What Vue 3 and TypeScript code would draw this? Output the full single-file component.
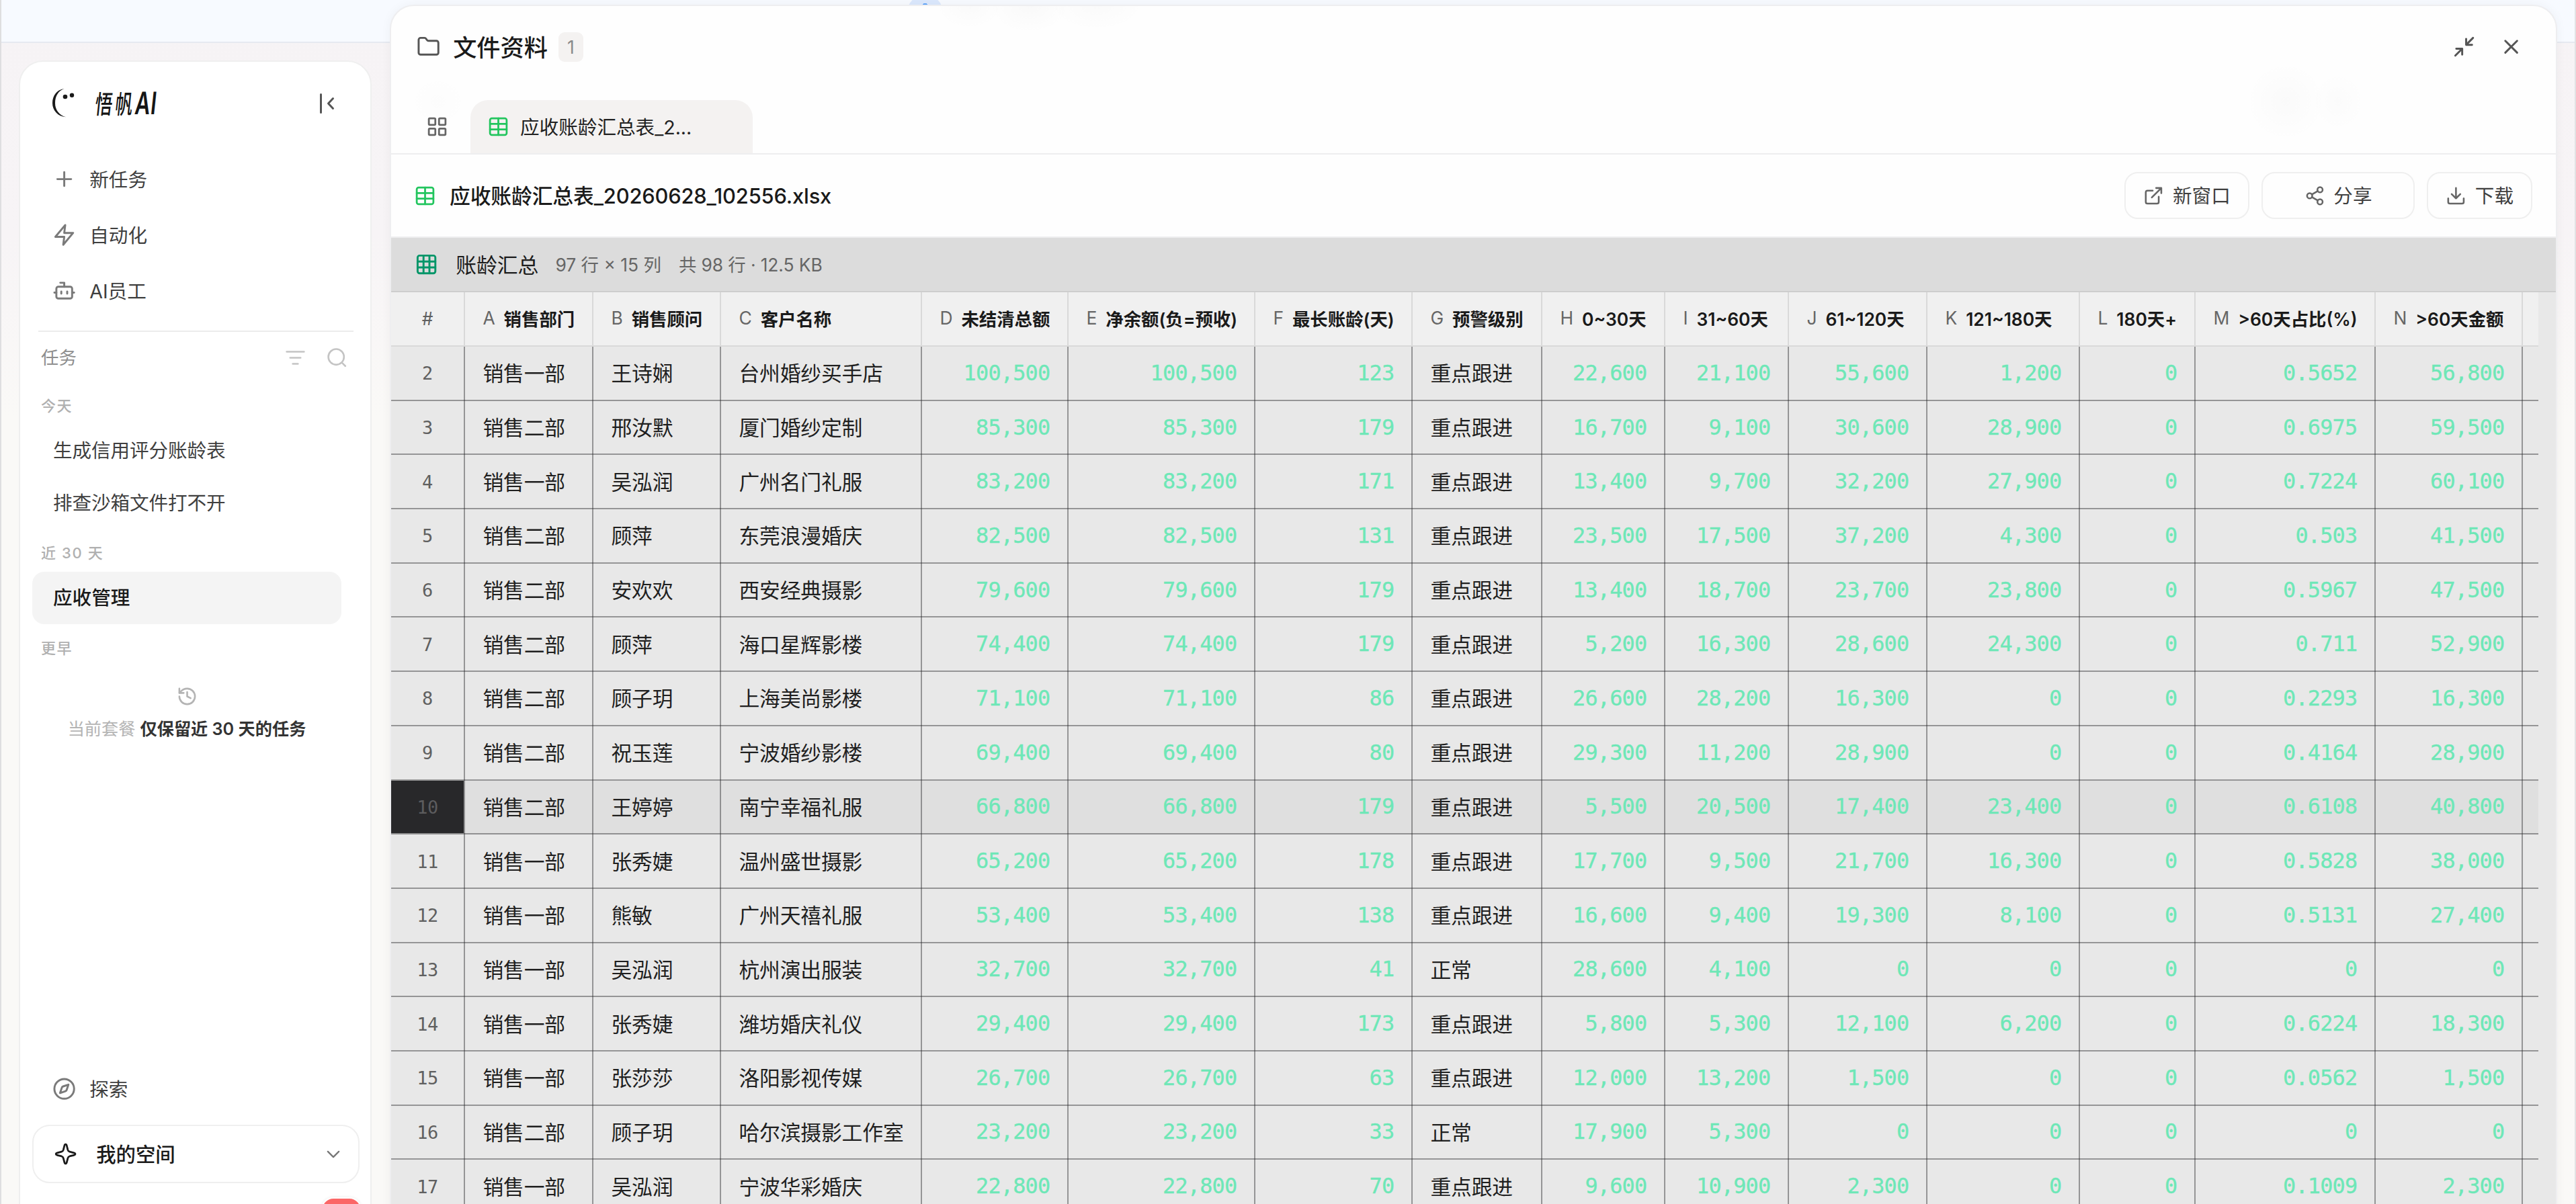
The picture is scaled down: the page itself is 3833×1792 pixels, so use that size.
<script setup lang="ts">
interface Column { letter: string; name: string; width: number; numeric: boolean }

const columns: Column[] = [
  { letter: 'A', name: '销售部门', width: 191, numeric: false },
  { letter: 'B', name: '销售顾问', width: 190, numeric: false },
  { letter: 'C', name: '客户名称', width: 299, numeric: false },
  { letter: 'D', name: '未结清总额', width: 218, numeric: true },
  { letter: 'E', name: '净余额(负=预收)', width: 278, numeric: true },
  { letter: 'F', name: '最长账龄(天)', width: 234, numeric: true },
  { letter: 'G', name: '预警级别', width: 193, numeric: false },
  { letter: 'H', name: '0~30天', width: 183, numeric: true },
  { letter: 'I', name: '31~60天', width: 184, numeric: true },
  { letter: 'J', name: '61~120天', width: 206, numeric: true },
  { letter: 'K', name: '121~180天', width: 227, numeric: true },
  { letter: 'L', name: '180天+', width: 172, numeric: true },
  { letter: 'M', name: '>60天占比(%)', width: 268, numeric: true },
  { letter: 'N', name: '>60天金额', width: 219, numeric: true },
]

const hot = '重点跟进'
const rows: string[][] = [
  ['销售一部', '王诗娴', '台州婚纱买手店', '100,500', '100,500', '123', hot, '22,600', '21,100', '55,600', '1,200', '0', '0.5652', '56,800'],
  ['销售二部', '邢汝默', '厦门婚纱定制', '85,300', '85,300', '179', hot, '16,700', '9,100', '30,600', '28,900', '0', '0.6975', '59,500'],
  ['销售一部', '吴泓润', '广州名门礼服', '83,200', '83,200', '171', hot, '13,400', '9,700', '32,200', '27,900', '0', '0.7224', '60,100'],
  ['销售二部', '顾萍', '东莞浪漫婚庆', '82,500', '82,500', '131', hot, '23,500', '17,500', '37,200', '4,300', '0', '0.503', '41,500'],
  ['销售二部', '安欢欢', '西安经典摄影', '79,600', '79,600', '179', hot, '13,400', '18,700', '23,700', '23,800', '0', '0.5967', '47,500'],
  ['销售二部', '顾萍', '海口星辉影楼', '74,400', '74,400', '179', hot, '5,200', '16,300', '28,600', '24,300', '0', '0.711', '52,900'],
  ['销售二部', '顾子玥', '上海美尚影楼', '71,100', '71,100', '86', hot, '26,600', '28,200', '16,300', '0', '0', '0.2293', '16,300'],
  ['销售二部', '祝玉莲', '宁波婚纱影楼', '69,400', '69,400', '80', hot, '29,300', '11,200', '28,900', '0', '0', '0.4164', '28,900'],
  ['销售二部', '王婷婷', '南宁幸福礼服', '66,800', '66,800', '179', hot, '5,500', '20,500', '17,400', '23,400', '0', '0.6108', '40,800'],
  ['销售一部', '张秀婕', '温州盛世摄影', '65,200', '65,200', '178', hot, '17,700', '9,500', '21,700', '16,300', '0', '0.5828', '38,000'],
  ['销售一部', '熊敏', '广州天禧礼服', '53,400', '53,400', '138', hot, '16,600', '9,400', '19,300', '8,100', '0', '0.5131', '27,400'],
  ['销售一部', '吴泓润', '杭州演出服装', '32,700', '32,700', '41', '正常', '28,600', '4,100', '0', '0', '0', '0', '0'],
  ['销售一部', '张秀婕', '潍坊婚庆礼仪', '29,400', '29,400', '173', hot, '5,800', '5,300', '12,100', '6,200', '0', '0.6224', '18,300'],
  ['销售一部', '张莎莎', '洛阳影视传媒', '26,700', '26,700', '63', hot, '12,000', '13,200', '1,500', '0', '0', '0.0562', '1,500'],
  ['销售二部', '顾子玥', '哈尔滨摄影工作室', '23,200', '23,200', '33', '正常', '17,900', '5,300', '0', '0', '0', '0', '0'],
  ['销售一部', '吴泓润', '宁波华彩婚庆', '22,800', '22,800', '70', hot, '9,600', '10,900', '2,300', '0', '0', '0.1009', '2,300'],
]
const activeRow = 10
const tracks = '110px ' + columns.map(c => c.width + 'px').join(' ') + ' 23px'
</script>

<template>
  <div class="app">
    <div class="topband"><i class="dot"></i></div>

    <aside class="sidebar">
      <header class="brand">
        <svg class="logo" viewBox="0 0 34 46" fill="#1a1a1a">
          <path d="M18.500 2C7 3.500 1 13 1 23.500S9 43.500 21 44.300C11 41.500 5 33.500 5 23.500S9.500 5 18.500 2Z" />
          <circle cx="20" cy="14" r="3.300" /><circle cx="30" cy="11.700" r="3.200" />
        </svg>
        <span class="wordmark">悟帆<em>AI</em></span>
        <svg class="collapse" viewBox="0 0 24 34" fill="none" stroke="#555" stroke-width="3" stroke-linecap="round" stroke-linejoin="round"><path d="M2.5 3.5v27M20.5 9.5 13.5 17l7 7.5" /></svg>
      </header>

      <nav class="nav">
        <a><svg class="ic" viewBox="0 0 24 24"><path d="M5 12h14M12 5v14" /></svg><span>新任务</span></a>
        <a><svg class="ic" viewBox="0 0 24 24"><path d="M13 2 3 14h9l-1 8 10-12h-9l1-8z" /></svg><span>自动化</span></a>
        <a><svg class="ic" viewBox="0 0 24 24"><path d="M12 8V4H8" /><rect width="16" height="12" x="4" y="8" rx="2" /><path d="M2 14h2M20 14h2M15 13v2M9 13v2" /></svg><span>AI员工</span></a>
      </nav>

      <div class="tasks-head">
        <span>任务</span>
        <svg class="ic filter" viewBox="0 0 24 24"><path d="M2 5h20M6 12h12M9 19h6" /></svg>
        <svg class="ic search" viewBox="0 0 24 24"><circle cx="11" cy="11" r="9" /><path d="m21.5 21.5-4-4" /></svg>
      </div>
      <div class="group g1">今天</div>
      <a class="task">生成信用评分账龄表</a>
      <a class="task">排查沙箱文件打不开</a>
      <div class="group g2">近 30 天</div>
      <a class="task active">应收管理</a>
      <div class="group g3">更早</div>
      <div class="retention">
        <svg class="ic" viewBox="0 0 24 24"><path d="M3 12a9 9 0 1 0 9-9 9.75 9.75 0 0 0-6.74 2.74L3 8" /><path d="M3 3v5h5M12 7v5l4 2" /></svg>
        <p>当前套餐 <b>仅保留近 30 天的任务</b></p>
      </div>

      <div class="foot">
        <a class="explore"><svg class="ic" viewBox="0 0 24 24"><circle cx="12" cy="12" r="10" /><path d="m16.24 7.76-1.8 5.41a2 2 0 0 1-1.27 1.27L7.76 16.24l1.8-5.41a2 2 0 0 1 1.27-1.27z" /></svg><span>探索</span></a>
        <a class="space">
          <svg class="spark" viewBox="0 0 24 24"><path d="M12 2.2c.7 0 1 .6 1.200 1.400l1.100 4.300c.3 1 .8 1.500 1.800 1.800l4.300 1.100c.8.2 1.400.5 1.400 1.200s-.6 1-1.400 1.200l-4.300 1.100c-1 .3-1.500.8-1.800 1.800l-1.100 4.300c-.2.8-.5 1.400-1.200 1.400s-1-.6-1.200-1.400l-1.100-4.300c-.3-1-.8-1.500-1.800-1.800l-4.300-1.100c-.8-.2-1.400-.5-1.400-1.200s.6-1 1.400-1.200l4.300-1.100c1-.3 1.500-.8 1.800-1.800l1.100-4.300C11 2.800 11.300 2.200 12 2.200Z" /></svg>
          <span>我的空间</span>
          <svg class="ic chev" viewBox="0 0 24 24"><path d="m5 8.500 7 7 7-7" /></svg>
        </a>
        <i class="badge"></i>
      </div>
    </aside>

    <section class="panel">
      <header class="phead">
        <svg class="ic folder" viewBox="0 0 24 24"><path d="M20 20a2 2 0 0 0 2-2V8a2 2 0 0 0-2-2h-7.900a2 2 0 0 1-1.690-.9L9.600 3.900A2 2 0 0 0 7.930 3H4a2 2 0 0 0-2 2v13a2 2 0 0 0 2 2Z" /></svg>
        <h1>文件资料</h1>
        <span class="count">1</span>
        <svg class="ic shrink" viewBox="0 0 24 24"><path d="m14 10 7-7M20 10h-6V4M3 21l7-7M4 14h6v6" /></svg>
        <svg class="ic close" viewBox="0 0 24 24"><path d="M18 6 6 18M6 6l12 12" /></svg>
      </header>
      <div class="tabs">
        <svg class="ic grid" viewBox="0 0 24 24"><rect x="3" y="3" width="7" height="7" rx="1" /><rect x="14" y="3" width="7" height="7" rx="1" /><rect x="14" y="14" width="7" height="7" rx="1" /><rect x="3" y="14" width="7" height="7" rx="1" /></svg>
        <div class="tab">
          <svg class="ic sheet" viewBox="0 0 24 24"><path d="M12 3v18" /><rect width="18" height="18" x="3" y="3" rx="2" /><path d="M3 9h18M3 15h18" /></svg>
          <span>应收账龄汇总表_2...</span>
        </div>
      </div>
      <div class="filebar">
        <svg class="ic sheet" viewBox="0 0 24 24"><path d="M12 3v18" /><rect width="18" height="18" x="3" y="3" rx="2" /><path d="M3 9h18M3 15h18" /></svg>
        <h2>应收账龄汇总表_20260628_102556.xlsx</h2>
        <button class="b1"><svg class="ic" viewBox="0 0 24 24"><path d="M15 3h6v6M10 14 21 3M18 13v6a2 2 0 0 1-2 2H5a2 2 0 0 1-2-2V8a2 2 0 0 1 2-2h6" /></svg><span>新窗口</span></button>
        <button class="b2"><svg class="ic" viewBox="0 0 24 24"><circle cx="18" cy="5" r="3" /><circle cx="6" cy="12" r="3" /><circle cx="18" cy="19" r="3" /><path d="m8.590 13.510 6.830 3.980M15.410 6.510l-6.820 3.980" /></svg><span>分享</span></button>
        <button class="b3"><svg class="ic" viewBox="0 0 24 24"><path d="M21 15v4a2 2 0 0 1-2 2H5a2 2 0 0 1-2-2v-4M7 10l5 5 5-5M12 15V3" /></svg><span>下载</span></button>
      </div>
      <div class="sheetbar">
        <svg class="ic teal" viewBox="0 0 24 24"><rect width="18" height="18" x="3" y="3" rx="2" /><path d="M3 9h18M3 15h18M9 3v18M15 3v18" /></svg>
        <strong>账龄汇总</strong>
        <span class="dim">97 行 × 15 列</span>
        <span class="size">共 98 行 · 12.5 KB</span>
      </div>
      <div class="sheetview">
        <div class="row head" :style="{ gridTemplateColumns: tracks }">
          <div class="cell idx">#</div>
          <div v-for="c in columns" :key="c.letter" class="cell"><i>{{ c.letter }}</i><b>{{ c.name }}</b></div>
          <div class="cell rest"></div>
        </div>
        <div v-for="(r, i) in rows" :key="i" class="row" :class="{ current: i + 2 === activeRow }" :style="{ gridTemplateColumns: tracks }">
          <div class="cell idx">{{ i + 2 }}</div>
          <div v-for="(v, j) in r" :key="j" class="cell" :class="{ num: columns[j].numeric }">{{ v }}</div>
          <div class="cell rest"></div>
        </div>
      </div>
    </section>
  </div>
</template>

<style>
html, body { margin: 0; overflow: hidden; }
</style>

<style scoped>
* { box-sizing: border-box; }
.app {
  position: relative; width: 3833px; height: 1792px; overflow: hidden; display: flex; align-items: flex-start;
  background: linear-gradient(180deg, #f6f3f5 0, #f7f4f6 350px, #faf9f7 620px, #faf9f7 100%);
  border-left: 2px solid #dedee0; border-right: 2px solid #e2e2e4;
  font-family: Inter, "Noto Sans CJK SC", sans-serif; font-size: 28.6px; color: #3f3f3f;
}
.topband { position: absolute; left: 0; right: 0; top: 0; height: 64px; background: #f7faff; border-bottom: 2px solid #e6e9f0; }
.dot { position: absolute; left: 1348px; top: -8px; width: 53px; height: 53px; border-radius: 50%; background: radial-gradient(circle at 50% 17px, #60a5fa 0 4px, transparent 4.500px), #dbe8fd; }
.ic { display: block; flex: none; width: 35.2px; height: 35.2px; fill: none; stroke: currentColor; stroke-width: 2; stroke-linecap: round; stroke-linejoin: round; }

.sidebar {
  position: relative; flex: none; width: 525px; height: 1750px; margin: 90px 0 0 26px; padding: 0 18px;
  background: #fff; border: 2px solid #efefef; border-radius: 36px; display: flex; flex-direction: column;
}
.brand { height: 127px; flex: none; display: flex; align-items: center; padding: 0 0 4px 29px; }
.brand > * { flex: none; }
.logo { width: 34px; height: 46px; margin-top: -2px; }
.wordmark { display: flex; align-items: center; width: 92px; height: 50px; margin: -2px 0 0 31px; font-family: "Noto Sans CJK SC", sans-serif; font-weight: 500; font-size: 38px; line-height: 50px; color: #151515; white-space: nowrap; transform: skewX(-6deg) scaleX(.68); transform-origin: 0 50%; letter-spacing: 6px; }
.wordmark em { font-family: Inter, sans-serif; font-style: normal; font-size: 46px; font-weight: 600; letter-spacing: 1px; margin-left: -1px; }
.collapse { width: 24px; height: 34px; margin-left: 241px; margin-top: 1px; }
.nav { display: flex; flex-direction: column; margin-top: 6px; padding-bottom: 18px; margin-inline: 9px 7px; border-bottom: 2px solid #ececec; }
.nav a, .explore { display: flex; align-items: center; height: 83px; padding-left: 21px; gap: 20px; }
.nav a span, .explore span, .tab span, button span, .space span { margin-top: -3px; }
.nav .ic, .explore .ic { color: #7a7a7a; }
.tasks-head { display: flex; align-items: center; height: 77px; padding-left: 13px; font-size: 26.4px; color: #8e8e8e; }
.tasks-head span { margin-top: -5px; }
.filter { width: 31px; height: 31px; margin-left: 310px; color: #c4c4c4; }
.search { width: 31px; height: 31px; margin-left: 31px; color: #c4c4c4; }
.group { padding-left: 13px; font-size: 22px; letter-spacing: 1.6px; color: #b0b0b0; font-weight: 500; white-space: pre; }
.g1 { margin-top: 3px; height: 59px; line-height: 60px; }
.g2 { height: 63px; line-height: 71px; }
.g3 { height: 72px; line-height: 72px; }
.task { display: block; flex: none; width: 460px; height: 77.500px; line-height: 75px; padding-left: 31px; border-radius: 18px; }
.task:not(.active) { letter-spacing: -.1px; }
.active { background: #f4f4f4; color: #1a1a1a; font-weight: 500; line-height: 77px; }
.retention { width: 460px; padding-top: 20px; display: flex; flex-direction: column; align-items: center; color: #b4b4b4; }
.retention .ic { width: 31px; height: 31px; }
.retention p { margin: 13px 0 0; font-size: 25.200px; line-height: 40px; white-space: nowrap; }
.retention b { color: #333; font-weight: 600; }
.foot { position: absolute; left: 18px; right: 16px; bottom: 0; top: 1487px; }
.explore { padding-left: 30px; }
.space { display: flex; align-items: center; height: 87px; margin-top: 12px; padding: 0 23px 0 30px; border: 2px solid #efefef; border-radius: 26px; font-size: 29.4px; font-weight: 500; color: #1a1a1a; }
.spark { width: 35.2px; height: 35.2px; fill: none; stroke: #1a1a1a; stroke-width: 1.900; stroke-linejoin: round; }
.space span { flex: 1; margin-left: 28px; }
.chev { width: 28px; height: 28px; color: #777; }
.badge { position: absolute; left: 430px; top: 203px; width: 60px; height: 40px; border-radius: 18px; background: #fb6767; border: 2px solid #fff; box-shadow: 0 0 4px rgba(0,0,0,.08); }

.panel {
  position: relative; flex: none; width: 3225px; height: 1830px; margin: 7px 0 0 27px; overflow: hidden;
  background:
    radial-gradient(ellipse 50px 34px at 860px 0, rgba(0,0,0,.014), transparent),
    radial-gradient(ellipse 60px 40px at 950px 0, rgba(0,0,0,.018), transparent),
    radial-gradient(ellipse 70px 36px at 1050px 0, rgba(0,0,0,.016), transparent),
    radial-gradient(ellipse 60px 60px at 2819px 142px, rgba(0,0,0,.014), transparent),
    radial-gradient(ellipse 40px 44px at 2897px 142px, rgba(0,0,0,.01), transparent),
    radial-gradient(ellipse 45px 40px at 70px 142px, rgba(0,0,0,.008), transparent),
    #fefefe;
  border: 2px solid #eeeef0; border-radius: 36px; box-shadow: 0 0 16px rgba(40,30,30,.045);
  display: flex; flex-direction: column;
}
.panel > * { flex: none; }
.phead { display: flex; align-items: center; height: 122px; padding-left: 38px; color: #555; }
h1 { margin: 1px 0 0 19px; font-size: 35.2px; font-weight: 500; color: #1a1a1a; line-height: 50px; white-space: nowrap; }
.count { margin-left: 16px; width: 37px; height: 44px; border-radius: 9px; background: #f4f2f1; color: #8a8a8a; text-align: center; font-size: 26.4px; line-height: 44px; }
.shrink { margin-left: auto; }
.close { margin: 0 49px 0 35px; }
.tabs { display: flex; height: 99px; border-bottom: 2px solid #eeeeef; color: #666; }
.grid { margin: 41px 0 0 52px; }
.grid, .sheet { width: 33px; height: 33px; }
.tabs .sheet { margin-right: 16px; }
.tab { display: flex; align-items: center; width: 420px; height: 79px; margin: 18px 0 0 33px; padding-left: 25px; border-radius: 26px 26px 0 0; background: #f4f2f1; color: #222; white-space: nowrap; }
.sheet { color: #22c55e; }
.filebar { display: flex; align-items: center; height: 124px; padding: 0 35px 0 34px; border-bottom: 2px solid #eeeeef; }
h2 { margin: -4px auto 0 20px; font-size: 30.8px; font-weight: 500; color: #1a1a1a; white-space: nowrap; letter-spacing: -.13px; }
button { display: flex; align-items: center; justify-content: center; gap: 13px; height: 70px; padding: 0; margin-left: 18px; border: 2px solid #efefef; border-radius: 20px; background: transparent; font: inherit; color: #3f3f3f; white-space: nowrap; }
button .ic { width: 30.8px; height: 30.8px; color: #666; }
.b1 { width: 186px; } .b2 { width: 228px; } .b3 { width: 157px; }
.sheetbar { display: flex; align-items: center; height: 81px; padding-left: 35px; background: #dcdcdc; border-bottom: 2px solid #cdcdcd; font-size: 26.4px; color: #666; white-space: nowrap; }
.teal { color: #059669; }
.sheetbar strong, .sheetbar span { margin-top: -3px; }
.sheetbar strong { margin-left: 26px; font-size: 30.800px; font-weight: 400; color: #1c1c1c; }
.sheetbar .dim { margin-left: 25px; }
.sheetbar .size { margin-left: 26px; letter-spacing: -.1px; }
.sheetview { flex: 1; background: #e8e8e8; }
.row { display: grid; width: 3195px; height: 80.7px; box-shadow: inset 0 -2px rgba(39,39,42,.43); font-size: 30.8px; letter-spacing: -.15px; color: #1f1f1f; }
.cell { display: flex; align-items: center; padding: 0 28.400px 5px 26.4px; white-space: nowrap; box-shadow: inset -2px 0 rgba(39,39,42,.43); }
.rest { box-shadow: none; }
.idx { justify-content: center; padding: 0 2px 4px 0; color: #606060; }
.num, .row:not(.head) .idx { font-family: "DejaVu Sans Mono", monospace; }
.num { justify-content: flex-end; color: #6ee7b7; padding: 0 27.600px 3px 0; font-size: 31.900px; letter-spacing: -.8px; -webkit-text-stroke: .35px #6ee7b7; }
.row:not(.head) .idx { font-size: 27px; letter-spacing: -.5px; padding-bottom: 1px; }
.current { background: #dfdfdf; }
.current .idx { background: linear-gradient(#28282a, #28282a) 0 0 / 108px calc(100% - 2px) no-repeat; color: #5c5c5e !important; }
.head { height: 81px; background: #f0f0f0; box-shadow: inset 0 -2px #d9d9d9; font-size: 26.4px; letter-spacing: 0; }
.head .cell { box-shadow: inset -2px 0 #d9d9d9; }
.head .rest { box-shadow: none; }
.head i { font-style: normal; color: #666; margin-right: 13px; }
.head b { font-weight: 600; color: #1a1a1a; }
</style>
